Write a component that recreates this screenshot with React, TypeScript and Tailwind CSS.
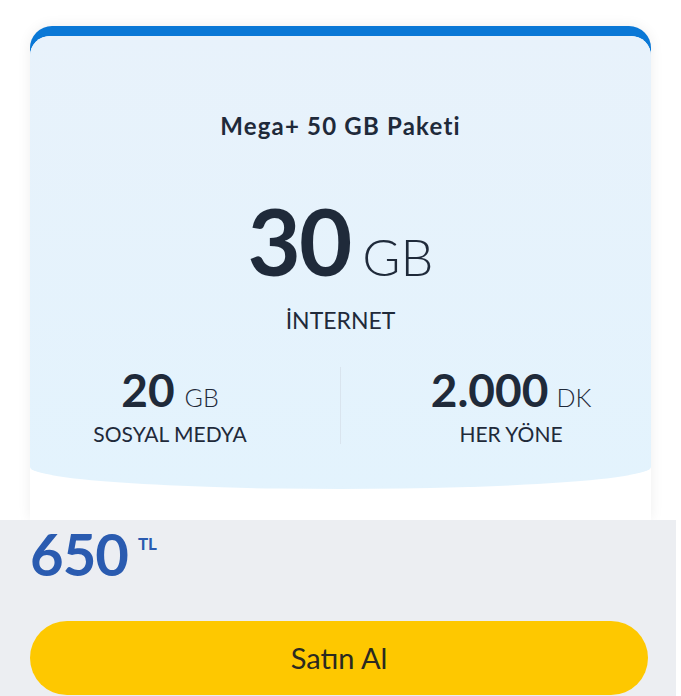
export default function App() {
  return (
    <div className="min-h-[696px] bg-white overflow-hidden" style={{ fontFamily: 'Lato, "Noto Sans", sans-serif' }}>
      <div className="pt-[26px] px-[30px]">
        {/* Package card */}
        <div className="rounded-t-[22px] bg-[#0a78d6] pt-[10px] shadow-[0_0_14px_rgba(0,0,0,0.07)]">
          <div className="rounded-t-[20px] bg-white h-[484px] overflow-hidden">
            <div className="h-[453px] bg-gradient-to-b from-[#e8f2fb] to-[#e3f3fd] rounded-b-[50%_22px] flex flex-col items-center">
              <h2 className="mt-[78px] text-[24px] font-bold tracking-[1.2px] text-[#1f2a3a] leading-none">Mega+ 50 GB Paketi</h2>

              <div className="mt-[57px] flex items-baseline gap-[12px] text-[#1f2a3a]">
                <span className="text-[92px] font-bold leading-none tracking-[-2px]">30</span>
                <span className="text-[52px] font-light leading-none">GB</span>
              </div>
              <div className="mt-[22px] text-[23px] text-[#1f2a3a] leading-none">İNTERNET</div>

              <div className="mt-[35px] flex items-stretch">
                <div className="w-[300px] flex flex-col items-center">
                  <div className="flex items-baseline gap-[10px] text-[#1f2a3a]">
                    <span className="text-[46px] font-bold leading-none">20</span>
                    <span className="text-[25px] font-light leading-none">GB</span>
                  </div>
                  <div className="mt-[10px] text-[21px] text-[#1f2a3a] leading-none">SOSYAL MEDYA</div>
                </div>
                <div className="w-px bg-[#d9e4ee] mx-[20px]" />
                <div className="w-[300px] flex flex-col items-center">
                  <div className="flex items-baseline gap-[8px] text-[#1f2a3a]">
                    <span className="text-[46px] font-bold leading-none">2.000</span>
                    <span className="text-[25px] font-light leading-none">DK</span>
                  </div>
                  <div className="mt-[10px] text-[21px] text-[#1f2a3a] leading-none">HER YÖNE</div>
                </div>
              </div>
            </div>
          </div>
        </div>
      </div>

      {/* Price and buy */}
      <div className="w-[676px] h-[176px] bg-[#eceef2] pl-[30px] pr-[28px] pt-[5px]">
        <div className="flex items-start gap-[10px] text-[#2a5bb0]">
          <span className="text-[58px] font-bold leading-none tracking-[-1px]">650</span>
          <span className="mt-[10px] text-[17px] font-bold leading-none">TL</span>
        </div>
        <button className="mt-[38px] w-[618px] h-[74px] rounded-full bg-[#fec800] text-[29px] text-[#2b2a20] flex items-center justify-center">
          Satın Al
        </button>
      </div>
    </div>
  );
}
